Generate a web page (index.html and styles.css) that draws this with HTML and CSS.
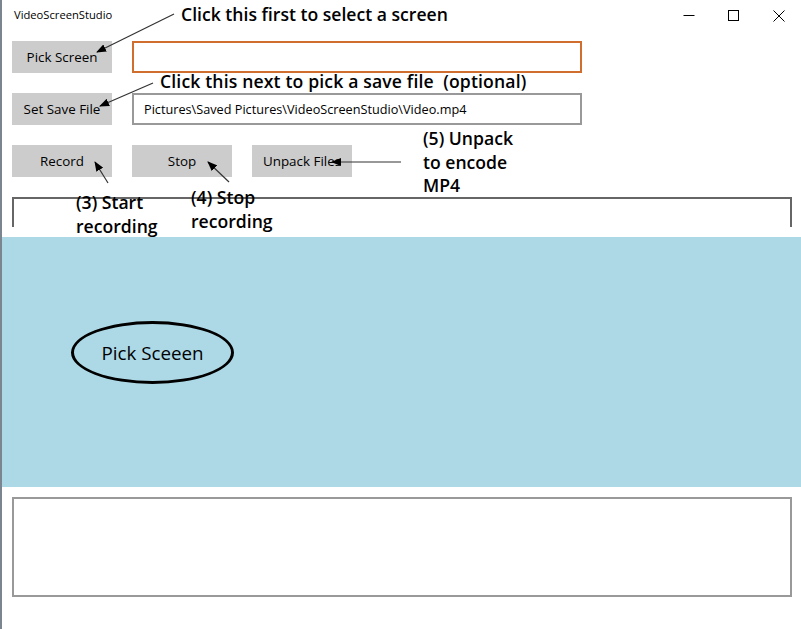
FILE: index.html
```html
<!DOCTYPE html>
<html>
<head>
<meta charset="utf-8">
<title>VideoScreenStudio</title>
<link rel="stylesheet" href="styles.css">
</head>
<body>
<div class="window">
  <header class="titlebar">
    <span class="title">VideoScreenStudio</span>
    <div class="controls">
      <svg class="ctl" width="46" height="30" viewBox="0 0 46 30"><line x1="17.5" y1="15.5" x2="28.5" y2="15.5" stroke="#000" stroke-width="1"/></svg>
      <svg class="ctl" width="46" height="30" viewBox="0 0 46 30"><rect x="17.5" y="10.5" width="10" height="10" fill="none" stroke="#000" stroke-width="1"/></svg>
      <svg class="ctl" width="46" height="30" viewBox="0 0 46 30"><path d="M17.5 10.5 L28.5 21.5 M28.5 10.5 L17.5 21.5" stroke="#000" stroke-width="1" fill="none"/></svg>
    </div>
  </header>

  <main class="content">
    <div class="row">
      <button class="btn">Pick Screen</button>
      <div class="field field-focus"></div>
    </div>
    <div class="row">
      <button class="btn">Set Save File</button>
      <div class="field">Pictures\Saved Pictures\VideoScreenStudio\Video.mp4</div>
    </div>
    <div class="row">
      <button class="btn">Record</button>
      <button class="btn">Stop</button>
      <button class="btn">Unpack Files</button>
    </div>
    <div class="bracket"></div>
    <section class="canvas">
      <div class="ellipse">Pick Sceeen</div>
    </section>
    <div class="logbox"></div>
  </main>

  <div class="note note1">Click this first to select a screen</div>
  <div class="note note2">Click this next to pick a save file&nbsp; (optional)</div>
  <div class="note note3">(3) Start<br>recording</div>
  <div class="note note4">(4) Stop<br>recording</div>
  <div class="note note5">(5) Unpack<br>to encode<br>MP4</div>

  <svg class="arrows" width="801" height="629" viewBox="0 0 801 629">
    <defs>
      <marker id="ah" markerWidth="10" markerHeight="8" refX="9" refY="4" orient="auto" markerUnits="userSpaceOnUse">
        <path d="M0 0 L10 4 L0 8 Z" fill="#000"/>
      </marker>
    </defs>
    <g stroke="#333" stroke-width="1.2" fill="none">
      <line x1="174" y1="14" x2="97" y2="52" marker-end="url(#ah)"/>
      <line x1="153" y1="83" x2="100" y2="106" marker-end="url(#ah)"/>
      <line x1="108" y1="183" x2="95" y2="162" marker-end="url(#ah)"/>
      <line x1="229" y1="182" x2="208" y2="162" marker-end="url(#ah)"/>
      <line x1="401" y1="162" x2="332" y2="162" marker-end="url(#ah)"/>
    </g>
  </svg>
</div>
</body>
</html>
```

FILE: styles.css
```css
* { box-sizing: border-box; }
html, body { margin: 0; padding: 0; background: #fff; }
body {
  font-family: "Open Sans", "Noto Sans", sans-serif;
  color: #000;
}
.window {
  position: relative;
  width: 801px;
  height: 629px;
  border-left: 2px solid #7b858f;
  overflow: hidden;
}
.titlebar {
  height: 31px;
  display: flex;
  align-items: center;
  justify-content: space-between;
}
.title {
  font-size: 11.2px;
  padding-left: 12px;
  padding-bottom: 2px;
}
.controls { display: flex; align-self: flex-start; }
.ctl { display: block; margin-right: -1px; }

.content {
  display: flex;
  flex-direction: column;
  padding-top: 10px;
}
.row {
  display: flex;
  gap: 20px;
  padding-left: 10px;
  margin-bottom: 20px;
}
.btn {
  width: 100px;
  height: 32px;
  border: none;
  background: #cccccc;
  font-family: "Open Sans", "Noto Sans", sans-serif;
  font-size: 13.4px;
  color: #000;
  padding: 0;
  white-space: nowrap;
}
.field {
  width: 450px;
  height: 32px;
  border: 2px solid #999999;
  font-size: 12.7px;
  padding-left: 10px;
  display: flex;
  align-items: center;
}
.field-focus { border-color: #cf6e2d; }

.bracket {
  margin-left: 10px;
  width: 780px;
  height: 30px;
  border: 2px solid #666666;
  border-bottom: none;
}
.canvas {
  margin-top: 10px;
  height: 250px;
  background: #add8e6;
  position: relative;
}
.ellipse {
  position: absolute;
  left: 69px;
  top: 84px;
  width: 163px;
  height: 63px;
  border: 3px solid #000;
  border-radius: 50%;
  display: flex;
  align-items: center;
  justify-content: center;
  font-size: 18.8px;
}
.logbox {
  margin-top: 10px;
  margin-left: 10px;
  width: 780px;
  height: 100px;
  border: 2px solid #999999;
}

.note {
  position: absolute;
  font-size: 17.6px;
  font-weight: 600;
  line-height: 23.5px;
  white-space: nowrap;
}
.note1 { left: 179px; top: 3px; }
.note2 { left: 158px; top: 70px; letter-spacing: 0.15px; }
.note3 { left: 74px; top: 191px; }
.note4 { left: 189px; top: 186px; }
.note5 { left: 421px; top: 127px; }

.arrows {
  position: absolute;
  left: -2px;
  top: 0;
  pointer-events: none;
}
```
